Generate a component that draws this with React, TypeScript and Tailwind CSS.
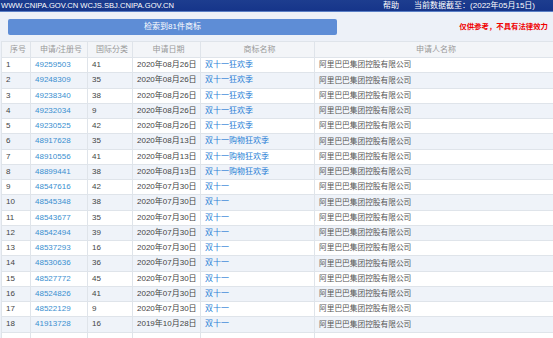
import React from 'react';

type Row = {
  no: number;
  reg: string;
  cls: string;
  date: string;
  mark: string;
};

const rows: Row[] = [
  { no: 1, reg: '49259503', cls: '41', date: '2020年08月26日', mark: '双十一狂欢季' },
  { no: 2, reg: '49248309', cls: '35', date: '2020年08月26日', mark: '双十一狂欢季' },
  { no: 3, reg: '49238340', cls: '38', date: '2020年08月26日', mark: '双十一狂欢季' },
  { no: 4, reg: '49232034', cls: '9', date: '2020年08月26日', mark: '双十一狂欢季' },
  { no: 5, reg: '49230525', cls: '42', date: '2020年08月26日', mark: '双十一狂欢季' },
  { no: 6, reg: '48917628', cls: '35', date: '2020年08月13日', mark: '双十一购物狂欢季' },
  { no: 7, reg: '48910556', cls: '41', date: '2020年08月13日', mark: '双十一购物狂欢季' },
  { no: 8, reg: '48899441', cls: '38', date: '2020年08月13日', mark: '双十一购物狂欢季' },
  { no: 9, reg: '48547616', cls: '42', date: '2020年07月30日', mark: '双十一' },
  { no: 10, reg: '48545348', cls: '38', date: '2020年07月30日', mark: '双十一' },
  { no: 11, reg: '48543677', cls: '35', date: '2020年07月30日', mark: '双十一' },
  { no: 12, reg: '48542494', cls: '39', date: '2020年07月30日', mark: '双十一' },
  { no: 13, reg: '48537293', cls: '16', date: '2020年07月30日', mark: '双十一' },
  { no: 14, reg: '48530636', cls: '36', date: '2020年07月30日', mark: '双十一' },
  { no: 15, reg: '48527772', cls: '45', date: '2020年07月30日', mark: '双十一' },
  { no: 16, reg: '48524826', cls: '41', date: '2020年07月30日', mark: '双十一' },
  { no: 17, reg: '48522129', cls: '9', date: '2020年07月30日', mark: '双十一' },
  { no: 18, reg: '41913728', cls: '16', date: '2019年10月28日', mark: '双十一' },
];

const APPLICANT = '阿里巴巴集团控股有限公司';

// column widths follow the screenshot: 29 / 57 / 45 / 68 / 114 / rest
const gridCols = 'grid grid-cols-[29px_57px_45px_68px_114px_1fr]';
const cell = 'border-r border-[#dfe4ea] pl-[4px] flex items-center whitespace-nowrap overflow-hidden';

const App: React.FC = () => {
  return (
    <div
      className="w-[553px] h-[338px] overflow-hidden bg-[#edf1f8] text-[8px] leading-none"
      style={{ fontFamily: '"Liberation Sans", "Noto Sans CJK SC", sans-serif' }}
    >
      {/* top banner */}
      <div className="h-[12px] bg-gradient-to-b from-[#1d3d8f] to-[#16358a] border-b border-[#5a7fc6] flex items-center text-white">
        <span className="pl-[1px] text-[7.6px] tracking-[0px]">WWW.CNIPA.GOV.CN WCJS.SBJ.CNIPA.GOV.CN</span>
        <span className="ml-auto mr-[15px]">帮助</span>
        <span className="mr-[18px]">当前数据截至：(2022年05月15日)</span>
      </div>

      {/* result bar */}
      <div className="h-[29px] flex items-center pl-[8px] pr-[5px]">
        <div className="w-[329px] h-[16px] rounded-[2px] bg-[#5e8dd6] text-white flex items-center justify-center">
          检索到81件商标
        </div>
        <span className="ml-auto text-[#f00000] font-bold text-[7.4px]">仅供参考，不具有法律效力</span>
      </div>

      {/* table */}
      <div className="ml-[1px] border-l border-t border-[#dfe4ea] bg-white">
        <div className={`${gridCols} h-[16px] bg-[#f3f5f8] text-[#999] border-b border-[#dfe4ea]`}>
          <div className={`${cell} justify-center pl-0`}>序号</div>
          <div className={`${cell} justify-center pl-0`}>申请/注册号</div>
          <div className={`${cell} justify-center pl-0`}>国际分类</div>
          <div className={`${cell} justify-center pl-0`}>申请日期</div>
          <div className={`${cell} justify-center pl-0`}>商标名称</div>
          <div className={`${cell} justify-center pl-0 border-r-0`}>申请人名称</div>
        </div>
        {rows.map((r) => (
          <div
            key={r.no}
            className={`${gridCols} h-[15.25px] border-b border-[#dfe4ea] ${r.no % 2 === 0 ? 'bg-[#eff3f9]' : 'bg-white'}`}
          >
            <div className={`${cell} text-[#444]`}>{r.no}</div>
            <div className={`${cell} text-[#3a8fd0] pl-[3px]`}>{r.reg}</div>
            <div className={`${cell} text-[#444] pl-[3px]`}>{r.cls}</div>
            <div className={`${cell} text-[#444] pl-[3px]`}>{r.date}</div>
            <div className={`${cell} text-[#2a7fd6] pl-[3px]`}>{r.mark}</div>
            <div className={`${cell} text-[#555] pl-[3px] border-r-0 text-[7.7px]`}>{APPLICANT}</div>
          </div>
        ))}
        <div className={`${gridCols} h-[15.25px] bg-white`}>
          <div className={cell} />
          <div className={cell} />
          <div className={cell} />
          <div className={cell} />
          <div className={cell} />
          <div className={`${cell} border-r-0`} />
        </div>
      </div>
    </div>
  );
};

export default App;
